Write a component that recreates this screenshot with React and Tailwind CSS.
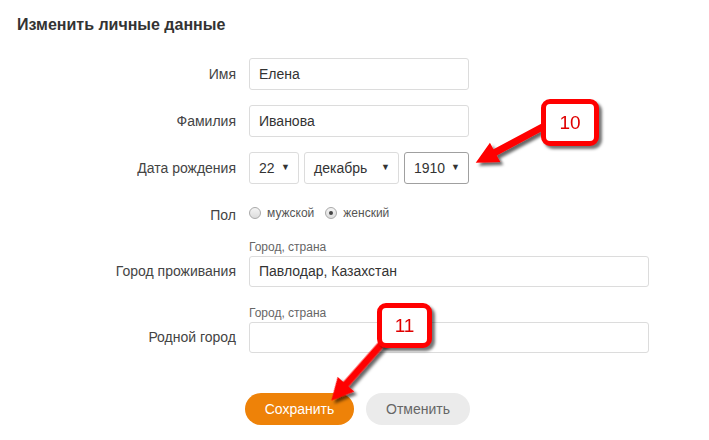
import React from "react";

function Arrow({ sx, sy, angle, len }) {
  const head = 22;
  const hw = 11;
  const sw = 3.5;
  const b = len - head;
  const pts = `0,${-sw} ${b},${-sw} ${b},${-hw} ${len},0 ${b},${hw} ${b},${sw} 0,${sw}`;
  return (
    <g transform={`translate(${sx} ${sy}) rotate(${angle})`}>
      <polygon points={pts} fill="#ff0000" />
    </g>
  );
}

function Callout({ className, children }) {
  return (
    <div
      className={`absolute flex items-center justify-center rounded-[9px] border-[5px] border-[#ff0000] bg-white text-[19px] leading-none text-[#e00000] shadow-[3px_3px_3px_rgba(0,0,0,0.55)] ${className}`}
    >
      {children}
    </div>
  );
}

function Select({ w, value, focused }) {
  return (
    <div
      className={`flex h-[32px] items-center justify-between rounded-[3px] border bg-white pl-[9px] pr-[8px] text-[14px] text-[#333] ${
        focused ? "border-[#a0a0a0]" : "border-[#dcdcdc]"
      } ${w}`}
    >
      <span>{value}</span>
      <span className="text-[9px] text-[#333]">▼</span>
    </div>
  );
}

function Radio({ checked }) {
  return (
    <span className="flex h-[12px] w-[12px] items-center justify-center rounded-full border border-[#a9a9a9] bg-gradient-to-b from-[#f4f4f4] to-[#dcdcdc]">
      {checked && <span className="h-[4px] w-[4px] rounded-full bg-[#444]" />}
    </span>
  );
}

export default function App() {
  return (
    <div className="relative h-[440px] w-[709px] overflow-hidden bg-white font-['Liberation_Sans',Arial,sans-serif] text-[#333]">
      <h1 className="pl-[17px] pt-[15px] text-[16px] font-bold leading-[20px] text-[#333]">
        Изменить личные данные
      </h1>

      <div className="mt-[23px] flex flex-col">
        <div className="flex items-center">
          <div className="w-[236px] text-right text-[14px] text-[#444]">Имя</div>
          <div className="ml-[13px] flex h-[32px] w-[220px] items-center rounded-[3px] border border-[#dcdcdc] px-[9px] text-[14px]">
            Елена
          </div>
        </div>

        <div className="mt-[15px] flex items-center">
          <div className="w-[236px] text-right text-[14px] text-[#444]">Фамилия</div>
          <div className="ml-[13px] flex h-[32px] w-[220px] items-center rounded-[3px] border border-[#dcdcdc] px-[9px] text-[14px]">
            Иванова
          </div>
        </div>

        <div className="mt-[15px] flex items-center">
          <div className="w-[236px] text-right text-[14px] text-[#444]">Дата рождения</div>
          <div className="ml-[13px] flex gap-[5px]">
            <Select w="w-[50px]" value="22" />
            <Select w="w-[95px]" value="декабрь" />
            <Select w="w-[65px]" value="1910" focused />
          </div>
        </div>

        <div className="mt-[19px] flex h-[20px] items-center">
          <div className="w-[236px] pt-[4px] text-right text-[14px] text-[#444]">Пол</div>
          <div className="ml-[13px] flex items-center text-[12px] text-[#555]">
            <Radio />
            <span className="ml-[6px]">мужской</span>
            <span className="ml-[11px]">
              <Radio checked />
            </span>
            <span className="ml-[6px]">женский</span>
          </div>
        </div>

        <div className="mt-[17px] flex items-end">
          <div className="flex h-[31px] w-[236px] items-center justify-end text-[14px] text-[#444]">
            Город проживания
          </div>
          <div className="ml-[13px] flex flex-col">
            <div className="mb-[2px] text-[12px] leading-[14px] text-[#666]">Город, страна</div>
            <div className="flex h-[31px] w-[400px] items-center rounded-[3px] border border-[#dcdcdc] px-[9px] text-[14px]">
              Павлодар, Казахстан
            </div>
          </div>
        </div>

        <div className="mt-[19px] flex items-end">
          <div className="flex h-[31px] w-[236px] items-center justify-end text-[14px] text-[#444]">
            Родной город
          </div>
          <div className="ml-[13px] flex flex-col">
            <div className="mb-[2px] text-[12px] leading-[14px] text-[#666]">Город, страна</div>
            <div className="h-[31px] w-[400px] rounded-[3px] border border-[#dcdcdc]" />
          </div>
        </div>

        <div className="ml-[245px] mt-[40px] flex gap-[12px]">
          <button className="h-[32px] w-[109px] rounded-full bg-[#ee8208] text-[14px] text-white">
            Сохранить
          </button>
          <button className="h-[32px] w-[104px] rounded-full bg-[#ebebeb] text-[14px] text-[#666]">
            Отменить
          </button>
        </div>
      </div>

      <svg className="pointer-events-none absolute left-0 top-0" width="709" height="440">
        <defs>
          <filter id="sh" x="-20%" y="-20%" width="140%" height="140%">
            <feDropShadow dx="3" dy="3" stdDeviation="1.5" floodColor="#000" floodOpacity="0.6" />
          </filter>
        </defs>
        <g filter="url(#sh)">
          <Arrow sx={548} sy={124} angle={151.8} len={82} />
          <Arrow sx={385} sy={340} angle={131.5} len={81} />
        </g>
      </svg>

      <Callout className="left-[541px] top-[99px] h-[47px] w-[58px]">10</Callout>
      <Callout className="left-[377px] top-[303px] h-[45px] w-[55px]">11</Callout>
    </div>
  );
}
